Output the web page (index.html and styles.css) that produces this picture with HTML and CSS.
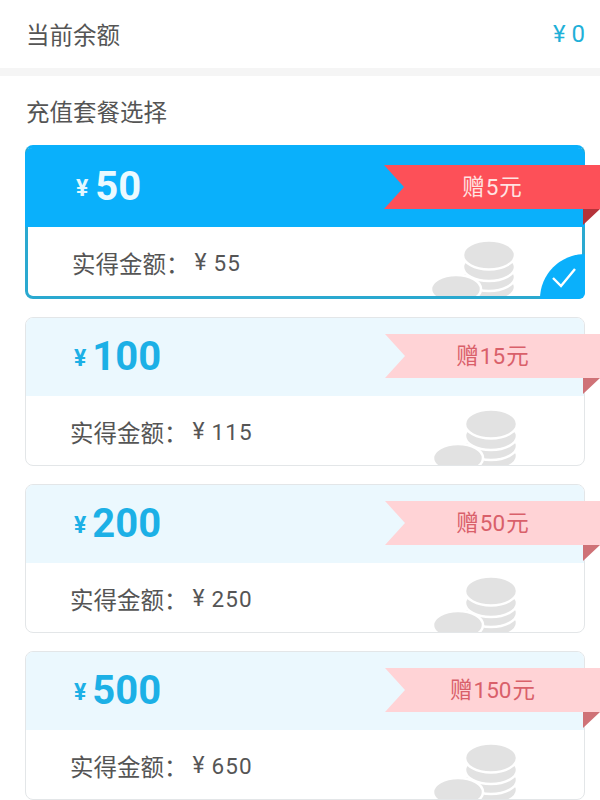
FILE: index.html
```html
<!DOCTYPE html>
<html lang="zh-CN">
<head>
	<meta charset="UTF-8">
	<title>充值</title>
	<link rel="stylesheet" href="styles.css">
</head>
<body>
	<svg class="defs" width="0" height="0">
		<symbol id="coins" viewBox="0 0 84 56">
			<ellipse cx="58" cy="47" rx="26" ry="14" class="coin"/>
			<ellipse cx="58" cy="37" rx="26" ry="14" class="coin"/>
			<ellipse cx="58" cy="27" rx="26" ry="14" class="coin"/>
			<ellipse cx="58" cy="15" rx="26" ry="14.5" class="coin"/>
			<ellipse cx="25" cy="49" rx="25" ry="14" class="coin"/>
		</symbol>
	</svg>

	<div class="balance">
		<span>当前余额</span>
		<span class="balance-num"><i>¥</i> 0</span>
	</div>
	<div class="band"></div>

	<h2 class="title">充值套餐选择</h2>

	<div class="list">
		<div class="card selected">
			<div class="card-top"><span class="yen">¥</span><span class="amount">50</span></div>
			<div class="card-bottom">实得金额：<span class="got-yen">¥</span><span class="got">55</span></div>
			<div class="ribbon">赠<b>5</b>元</div>
			<div class="fold"></div>
			<svg class="coins"><use href="#coins"/></svg>
			<svg class="check" viewBox="0 0 45 45">
				<path d="M0 45A45 45 0 0 1 45 0V39a6 6 0 0 1-6 6Z" fill="#0ab0fb"/>
				<path d="M13 24l8 8L35 15" fill="none" stroke="#fff" stroke-width="2.4"/>
			</svg>
		</div>

		<div class="card">
			<div class="card-top"><span class="yen">¥</span><span class="amount">100</span></div>
			<div class="card-bottom">实得金额：<span class="got-yen">¥</span><span class="got">115</span></div>
			<div class="ribbon">赠<b>15</b>元</div>
			<div class="fold"></div>
			<svg class="coins"><use href="#coins"/></svg>
		</div>

		<div class="card">
			<div class="card-top"><span class="yen">¥</span><span class="amount">200</span></div>
			<div class="card-bottom">实得金额：<span class="got-yen">¥</span><span class="got">250</span></div>
			<div class="ribbon">赠<b>50</b>元</div>
			<div class="fold"></div>
			<svg class="coins"><use href="#coins"/></svg>
		</div>

		<div class="card">
			<div class="card-top"><span class="yen">¥</span><span class="amount">500</span></div>
			<div class="card-bottom">实得金额：<span class="got-yen">¥</span><span class="got">650</span></div>
			<div class="ribbon">赠<b>150</b>元</div>
			<div class="fold"></div>
			<svg class="coins"><use href="#coins"/></svg>
		</div>
	</div>
</body>
</html>
```

FILE: styles.css
```css
html, body {
	margin: 0;
	height: 800px;
	overflow: hidden;
}
body {
	background: #fff;
	color: #555;
	font-family: "Noto Sans CJK SC", Roboto, sans-serif;
}
.defs {
	position: absolute;
}

/* balance row */
.balance {
	display: flex;
	justify-content: space-between;
	align-items: center;
	height: 68px;
	padding: 0 15px 0 26px;
	font-size: 23.5px;
}
.balance-num {
	color: #1fb0d8;
	font-family: Roboto, sans-serif;
	font-size: 24px;
}
.balance-num i {
	font-style: normal;
}
.band {
	height: 8px;
	background: #f5f5f5;
}
.title {
	margin: 0;
	padding-left: 26px;
	height: 69px;
	line-height: 70px;
	font-size: 23.5px;
	font-weight: 400;
}

/* cards */
.list {
	display: flex;
	flex-direction: column;
	gap: 18px;
	padding: 0 15px 0 25px;
}
.card {
	position: relative;
	height: 149px;
	box-sizing: border-box;
	border: 1px solid #e3e6e8;
	border-radius: 8px;
	background: #fff;
}
.card-top {
	display: flex;
	align-items: center;
	height: 78px;
	padding-left: 48px;
	background: #ebf8fe;
	border-radius: 7px 7px 0 0;
	color: #1cb0e6;
}
.yen {
	font: 700 23px Roboto, sans-serif;
	margin-right: 6px;
	padding-top: 2px;
}
.amount {
	font: 700 40px Roboto, sans-serif;
	margin-top: -2px;
}
.card-bottom {
	display: flex;
	align-items: center;
	height: 70px;
	box-sizing: border-box;
	padding: 1px 0 0 44px;
	font-size: 23.5px;
}
.got-yen {
	font-family: Roboto, sans-serif;
	font-size: 23px;
	margin-left: 5px;
	margin-right: 7px;
}
.got {
	font-family: Roboto, sans-serif;
	font-size: 22.5px;
	letter-spacing: 1px;
}

/* ribbon hangs over the card edge */
.ribbon {
	position: absolute;
	top: 16px;
	left: 359px;
	right: -16px;
	height: 44px;
	line-height: 40px;
	text-align: center;
	font-size: 22.5px;
	background: #ffd3d6;
	color: #d9606a;
	clip-path: polygon(0 0, 100% 0, 100% 100%, 0 100%, 20px 50%);
}
.ribbon b {
	font-family: Roboto, sans-serif;
	font-weight: 400;
	margin: 0 1px;
}
.fold {
	position: absolute;
	top: 60px;
	right: -16px;
	width: 17px;
	height: 16px;
	background: #cf7277;
	clip-path: polygon(0 0, 100% 0, 0 100%);
}
.coins {
	position: absolute;
	right: 67px;
	bottom: 0;
	width: 84px;
	height: 56px;
}
.coin {
	fill: #e2e2e2;
	stroke: #fff;
	stroke-width: 2.5;
}

/* selected card */
.card.selected {
	height: 154px;
	border: 3px solid #2aa9d0;
	border-top-color: #0ab0fb;
}
.selected .card-top {
	height: 79px;
	margin: 0 -3px;
	background: #0ab0fb;
	color: #e4f8ff;
	padding-left: 51px;
}
.selected .yen {
	margin-right: 7px;
}
.selected .amount {
	color: #eafaff;
}
.selected .card-bottom {
	padding-left: 44px;
}
.selected .ribbon {
	top: 17px;
	left: 356px;
	right: -18px;
	background: #fd5058;
	color: #ffe4e2;
}
.selected .fold {
	top: 61px;
	right: -18px;
	background: #b5333a;
}
.check {
	position: absolute;
	right: -3px;
	bottom: -3px;
	width: 45px;
	height: 45px;
}
```
